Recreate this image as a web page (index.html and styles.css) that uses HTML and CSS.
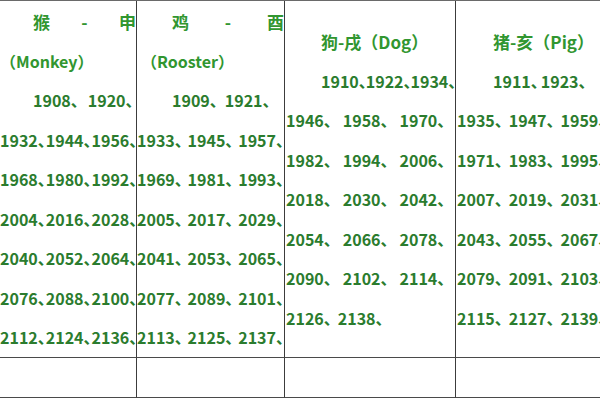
FILE: index.html
```html
<!DOCTYPE html>
<html lang="zh-CN">
<head>
<meta charset="utf-8">
<title>生肖年份表</title>
<link rel="stylesheet" href="styles.css">
</head>
<body>
<div class="sheet">
  <div class="cell c1">
    <div class="ln head spread in33"><span>猴</span><span>-</span><span>申</span></div>
    <div class="ln head paren">（Monkey）</div>
    <div class="ln in33 g9"><span>1908、</span><span>1920、</span></div>
    <div class="ln spread"><span>1932、</span><span>1944、</span><span>1956、</span></div>
    <div class="ln spread"><span>1968、</span><span>1980、</span><span>1992、</span></div>
    <div class="ln spread"><span>2004、</span><span>2016、</span><span>2028、</span></div>
    <div class="ln spread"><span>2040、</span><span>2052、</span><span>2064、</span></div>
    <div class="ln spread"><span>2076、</span><span>2088、</span><span>2100、</span></div>
    <div class="ln spread"><span>2112、</span><span>2124、</span><span>2136、</span></div>
  </div>
  <div class="cell c2">
    <div class="ln head spread in35"><span>鸡</span><span>-</span><span>酉</span></div>
    <div class="ln head paren in4">（Rooster）</div>
    <div class="ln in35 g7"><span>1909、</span><span>1921、</span></div>
    <div class="ln spread"><span>1933、</span><span>1945、</span><span>1957、</span></div>
    <div class="ln spread"><span>1969、</span><span>1981、</span><span>1993、</span></div>
    <div class="ln spread"><span>2005、</span><span>2017、</span><span>2029、</span></div>
    <div class="ln spread"><span>2041、</span><span>2053、</span><span>2065、</span></div>
    <div class="ln spread"><span>2077、</span><span>2089、</span><span>2101、</span></div>
    <div class="ln spread"><span>2113、</span><span>2125、</span><span>2137、</span></div>
  </div>
  <div class="cell c3">
    <div class="ln head in36">狗-戌（Dog）</div>
    <div class="ln in36 gm1"><span>1910、</span><span>1922、</span><span>1934、</span></div>
    <div class="ln in1 g11"><span>1946、</span><span>1958、</span><span>1970、</span></div>
    <div class="ln in1 g11"><span>1982、</span><span>1994、</span><span>2006、</span></div>
    <div class="ln in1 g11"><span>2018、</span><span>2030、</span><span>2042、</span></div>
    <div class="ln in1 g11"><span>2054、</span><span>2066、</span><span>2078、</span></div>
    <div class="ln in1 g11"><span>2090、</span><span>2102、</span><span>2114、</span></div>
    <div class="ln in1 g6"><span>2126、</span><span>2138、</span></div>
  </div>
  <div class="cell c4">
    <div class="ln head in37">猪-亥（Pig）</div>
    <div class="ln in37 g2"><span>1911、</span><span>1923、</span></div>
    <div class="ln in1 g6"><span>1935、</span><span>1947、</span><span>1959、</span></div>
    <div class="ln in1 g6"><span>1971、</span><span>1983、</span><span>1995、</span></div>
    <div class="ln in1 g6"><span>2007、</span><span>2019、</span><span>2031、</span></div>
    <div class="ln in1 g6"><span>2043、</span><span>2055、</span><span>2067、</span></div>
    <div class="ln in1 g6"><span>2079、</span><span>2091、</span><span>2103、</span></div>
    <div class="ln in1 g6"><span>2115、</span><span>2127、</span><span>2139、</span></div>
  </div>
  <div class="cell"></div>
  <div class="cell"></div>
  <div class="cell"></div>
  <div class="cell"></div>
</div>
</body>
</html>
```
FILE: styles.css
```css
html, body {
  margin: 0;
  padding: 0;
  background: #ffffff;
}
body {
  width: 600px;
  height: 400px;
  overflow: hidden;
}
.sheet {
  display: grid;
  grid-template-columns: 137px 148px 171px 200px;
  grid-template-rows: 357px 40px;
  width: 656px;
  border-top: 1px solid #6a6a6a;
  font-family: "Noto Sans CJK SC", "Liberation Sans", sans-serif;
  font-size: 16px;
  font-weight: 700;
  color: #2b7c2e;
}
.cell {
  border-right: 1px solid #3c3c3c;
  border-bottom: 1px solid #4a4a4a;
  display: flex;
  flex-direction: column;
  justify-content: center;
  padding-top: 2px;
  box-sizing: border-box;
  min-width: 0;
}
.ln {
  display: flex;
  align-items: center;
  height: 39.5px;
  line-height: 39.5px;
  white-space: nowrap;
  font-feature-settings: "halt" 1;
}
.head {
  font-size: 17px;
  font-weight: 700;
  color: #319630;
  font-feature-settings: normal;
}
.paren {
  font-size: 16px;
}
.spread { justify-content: space-between; }
.in1 { padding-left: 1px; }
.in4 { padding-left: 4px; }
.in33 { padding-left: 33px; }
.in35 { padding-left: 35px; }
.in36 { padding-left: 36px; }
.in37 { padding-left: 37px; }
.g2 { gap: 2px; }
.g6 { gap: 6px; }
.g7 { gap: 7px; }
.g9 { gap: 9px; }
.g11 { gap: 11px; }
.gm1 { gap: 0; }
.gm1 > span { margin-right: -1px; }
```
